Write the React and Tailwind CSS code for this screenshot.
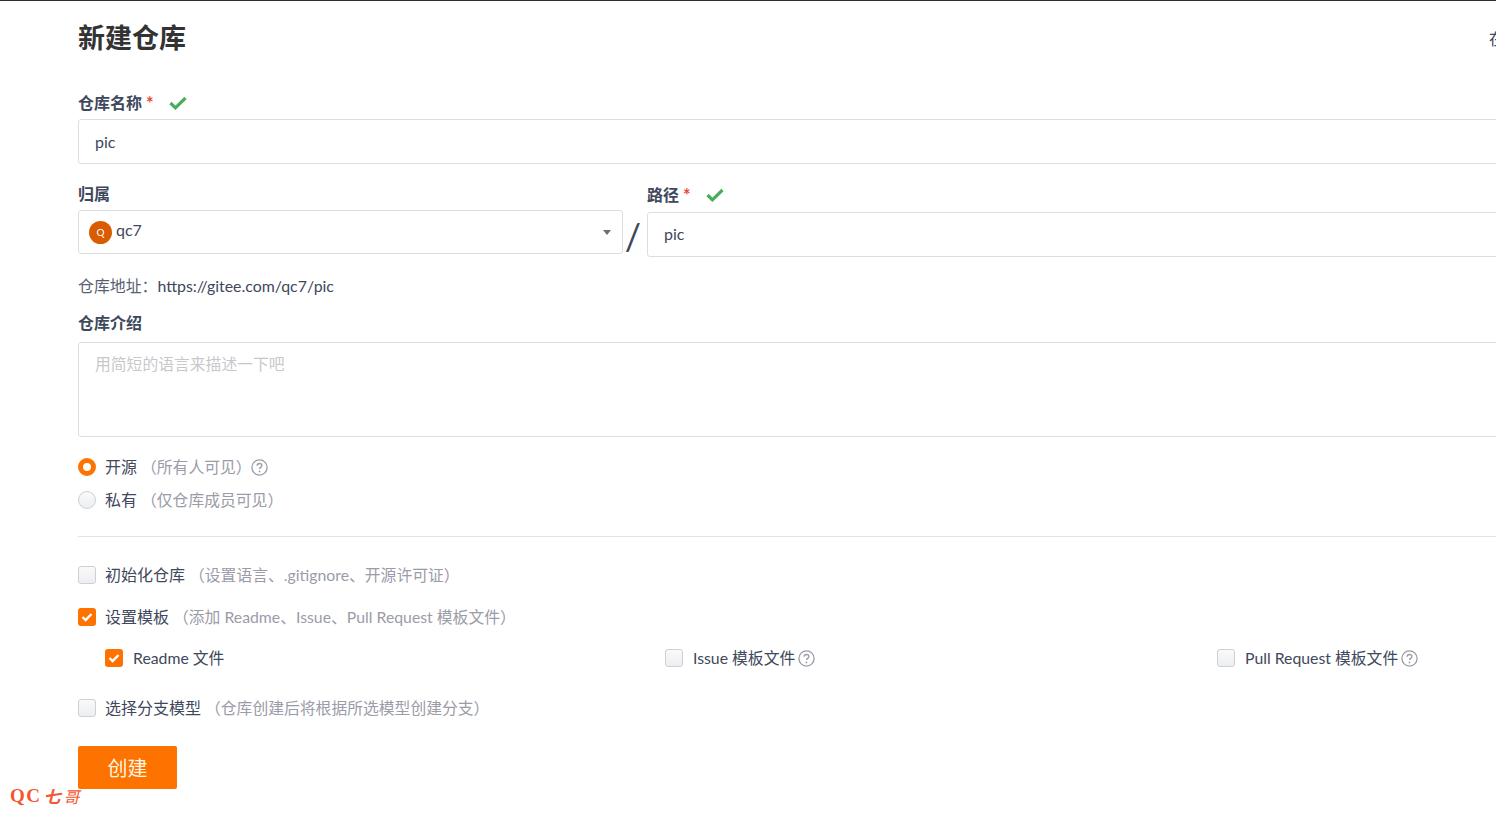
import React from 'react';

const font = { fontFamily: 'Lato, "Noto Sans CJK SC", sans-serif' };

function Check({ className }) {
    return (
        <svg className={className} width="18" height="14" viewBox="0 0 18 14" fill="none">
            <path d="M1.5 7 L6.4 11.8 L16.5 2" stroke="#4aad5b" strokeWidth="3.2" />
        </svg>
    );
}

function Help() {
    return (
        <svg className="shrink-0" width="17" height="17" viewBox="0 0 17 17" fill="none">
            <circle cx="8.5" cy="8.5" r="7.6" stroke="#9a9ca8" strokeWidth="1.3" />
            <path d="M6.1 6.8c0-1.4 1.1-2.3 2.4-2.3s2.4.9 2.4 2.1c0 1.8-2.4 1.7-2.4 3.5" stroke="#9a9ca8" strokeWidth="1.3" />
            <circle cx="8.5" cy="12.4" r=".9" fill="#9a9ca8" />
        </svg>
    );
}

function Box({ checked }) {
    if (checked) {
        return (
            <span className="w-[18px] h-[18px] shrink-0 rounded-[3px] bg-[#fe7300] flex items-center justify-center">
                <svg width="12" height="10" viewBox="0 0 12 10" fill="none">
                    <path d="M1.5 5 L4.6 8 L10.5 2" stroke="#fff" strokeWidth="2.4" />
                </svg>
            </span>
        );
    }
    return <span className="w-[18px] h-[18px] shrink-0 rounded-[3px] border border-[#cfd0d4] bg-gradient-to-b from-[#fafafa] to-[#eceef1]"></span>;
}

function CheckRow({ checked, label, hint, className }) {
    return (
        <div className={`flex items-center h-6 text-base ${className}`}>
            <Box checked={checked} />
            <span className="ml-[9px] text-[#40485b]">{label}</span>
            <span className="ml-[4px] text-[15.8px] text-[#9a9ca8]">{hint}</span>
        </div>
    );
}

export default function App() {
    return (
        <div style={font} className="w-[1496px] h-[819px] overflow-hidden bg-white border-t border-[#2f2f2f] relative text-[#40485b]">
            <div className="w-[1600px] pl-[78px]">
                <div className="flex items-center h-[74px] pb-[1px] relative">
                    <h1 className="text-[27px] font-bold text-[#333333] leading-none">新建仓库</h1>
                    <span className="absolute left-[1411px] top-[26px] text-base text-[#40485b]">在</span>
                </div>

                <div className="flex items-center h-[20px] mt-[18px] text-base font-bold">
                    <span>仓库名称</span>
                    <span className="text-[#e74c3c] ml-1 text-lg">*</span>
                    <Check className="ml-[15px] -mt-[1px]" />
                </div>
                <div className="mt-[6px] h-[45px] border border-[#dedee0] rounded-[3px] flex items-center pl-4 text-base">pic</div>

                <div className="flex mt-[20px]">
                    <div className="w-[545px] shrink-0">
                        <div className="h-[20px] flex items-center text-base font-bold">归属</div>
                        <div className="mt-[6px] h-[44px] border border-[#dedee0] rounded-[3px] flex items-center pl-[10px] pr-[11px] text-base">
                            <span className="w-[23px] h-[23px] rounded-full bg-[#d95c00] text-white text-[10px] flex items-center justify-center">Q</span>
                            <span className="ml-[4px] -mt-[5px]">qc7</span>
                            <span className="ml-auto w-0 h-0 border-x-[4px] border-x-transparent border-t-[5px] border-t-[#6e6e6e]"></span>
                        </div>
                    </div>
                    <div className="w-[20px] shrink-0 flex items-end justify-center h-[73px] text-[36px] leading-[42px] font-normal">/</div>
                    <div className="flex-1 ml-[4px]">
                        <div className="h-[20px] mt-[1px] flex items-center text-base font-bold">
                            <span>路径</span>
                            <span className="text-[#e74c3c] ml-1 text-lg">*</span>
                            <Check className="ml-[15px] -mt-[1px]" />
                        </div>
                        <div className="mt-[7px] h-[45px] border border-[#dedee0] rounded-[3px] flex items-center pl-4 pb-[2px] text-base">pic</div>
                    </div>
                </div>

                <div className="mt-[17px] h-[24px] flex items-center text-[15.9px]">
                    <span className="text-[#5a6072]">仓库地址：</span>
                    <span>https://gitee.com/qc7/pic</span>
                </div>
                <div className="mt-[15px] h-[20px] flex items-center text-base font-bold">仓库介绍</div>
                <div className="mt-[9px] h-[95px] border border-[#dedee0] rounded-[3px] pl-4 pt-[9px] text-[15.8px] text-[#c8c8cc]">用简短的语言来描述一下吧</div>

                <div className="flex items-center h-6 mt-[18px] text-base">
                    <span className="w-[18px] h-[18px] rounded-full border-[5px] border-[#fe7300] bg-white"></span>
                    <span className="ml-[9px]">开源</span>
                    <span className="ml-[4px] text-[15.8px] text-[#9a9ca8]">（所有人可见）</span>
                    <span className="-ml-[1px]"><Help /></span>
                </div>
                <div className="flex items-center h-6 mt-[9px] text-base">
                    <span className="w-[18px] h-[18px] rounded-full border border-[#cfd0d4] bg-gradient-to-b from-[#fafafa] to-[#eceef1]"></span>
                    <span className="ml-[9px]">私有</span>
                    <span className="ml-[4px] text-[15.8px] text-[#9a9ca8]">（仅仓库成员可见）</span>
                </div>

                <div className="mt-[24px] border-t border-[#e3e3e5]"></div>

                <CheckRow className="mt-[26px]" label="初始化仓库" hint="（设置语言、.gitignore、开源许可证）" />
                <CheckRow className="mt-[18px]" checked label="设置模板" hint="（添加 Readme、Issue、Pull Request 模板文件）" />

                <div className="flex mt-[17px] h-6 pl-[27px] text-[15.8px]">
                    <div className="w-[560px] flex items-center shrink-0">
                        <Box checked />
                        <span className="ml-[10px]">Readme 文件</span>
                    </div>
                    <div className="w-[552px] flex items-center shrink-0">
                        <Box />
                        <span className="ml-[10px]">Issue 模板文件</span>
                        <span className="ml-[3px]"><Help /></span>
                    </div>
                    <div className="flex items-center">
                        <Box />
                        <span className="ml-[10px]">Pull Request 模板文件</span>
                        <span className="ml-[3px]"><Help /></span>
                    </div>
                </div>

                <CheckRow className="mt-[26px]" label="选择分支模型" hint="（仓库创建后将根据所选模型创建分支）" />

                <button className="mt-[26px] w-[99px] h-[43px] rounded-[2px] bg-[#fe7300] text-[#fff6e0] text-[20px] flex items-center justify-center">创建</button>
            </div>

            <div className="absolute left-[10px] top-[782px] flex items-center text-[#f4552f] font-bold h-[26px]">
                <span className="text-[19px] tracking-[1.5px]" style={{ fontFamily: '"Liberation Serif", serif' }}>QC</span>
                <span className="ml-[2px] text-[17px] italic" style={{ fontFamily: '"Noto Sans CJK SC", sans-serif' }}>七</span>
                <span className="ml-[3px] text-[16px] italic font-normal" style={{ fontFamily: '"Noto Sans CJK SC", sans-serif' }}>哥</span>
            </div>
        </div>
    );
}
